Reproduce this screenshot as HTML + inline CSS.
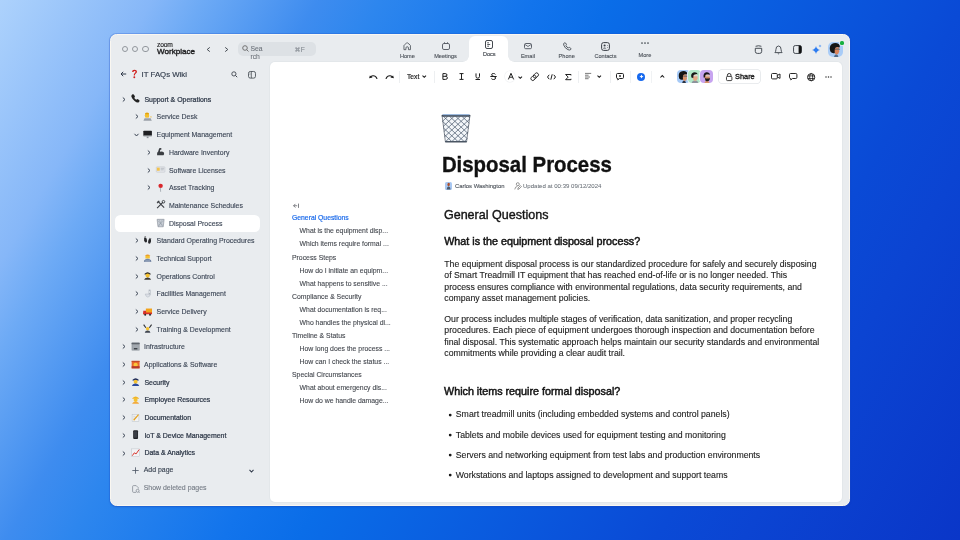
<!DOCTYPE html>
<html><head><meta charset="utf-8">
<style>
*{margin:0;padding:0;box-sizing:border-box}
html,body{width:960px;height:540px;overflow:hidden}
body{position:relative;font-family:"Liberation Sans",sans-serif;
background:linear-gradient(120deg,#ADD2FC 0%,#86B7F8 12%,#6DAAF5 16%,#3E8CEF 25%,#2D86EE 30%,#1274EC 42%,#0A6DE8 48%,#0A4AD6 76%,#0B44D2 83%,#0A36C8 100%)}
.a{position:absolute;white-space:nowrap;line-height:1}
.win{position:absolute;left:109.6px;top:33.7px;width:740.9px;height:472.3px;background:#E9ECEF;border-radius:6.5px;border:1px solid #FAF7F1;box-shadow:0 0 0 1px rgba(30,80,200,0.25),0 1px 2px rgba(10,40,150,0.25)}
.panel{position:absolute;left:269.6px;top:62.2px;width:572.4px;height:439.6px;background:#fff;border-radius:5px;box-shadow:0 0 0 1px #E3E7EA}
.tl{position:absolute;width:6.6px;height:6.6px;border:0.9px solid #92979D;border-radius:50%;top:45.6px}
.nav{color:#4B5159;font-size:5.6px;-webkit-text-stroke:0.12px #4B5159}
.sb{color:#3B4555;font-size:6.95px;-webkit-text-stroke:0.12px #3B4555}
.sbb{color:#2F3949;font-size:6.95px;-webkit-text-stroke:0.24px #2F3949}
.toc{color:#43474E;font-size:6.86px;-webkit-text-stroke:0.1px #43474E}
.body{color:#1E1E1E;font-size:8.72px;-webkit-text-stroke:0.12px #1E1E1E}
.h3{font-size:10.76px;color:#141414;-webkit-text-stroke:0.48px #141414}
.md{-webkit-text-stroke:0.25px currentColor}
svg{position:absolute;overflow:visible}
</style></head><body>
<div id="wrap" style="position:absolute;left:0;top:0;width:960px;height:540px;will-change:transform">
<div class="win"></div>
<div class="panel"></div>

<!-- traffic lights -->
<div class="tl" style="left:121.6px"></div>
<div class="tl" style="left:131.7px"></div>
<div class="tl" style="left:142px"></div>

<!-- logo -->
<div class="a" style="left:156.9px;top:42.1px;font-size:6.7px;color:#1d1d1f;letter-spacing:-0.1px;-webkit-text-stroke:0.15px #1d1d1f">zoom</div>
<div class="a" style="left:157px;top:48.1px;font-size:8.1px;color:#1d1d1f;-webkit-text-stroke:0.38px #1d1d1f">Workplace</div>

<!-- back/forward -->
<svg style="left:206px;top:47px" width="5" height="5" viewBox="0 0 5 5"><path d="M3.8 0.4 L1.2 2.5 L3.8 4.6" fill="none" stroke="#3E444C" stroke-width="0.95"/></svg>
<svg style="left:224.2px;top:47px" width="5" height="5" viewBox="0 0 5 5"><path d="M1.2 0.4 L3.8 2.5 L1.2 4.6" fill="none" stroke="#3E444C" stroke-width="0.95"/></svg>

<!-- search -->
<div class="a" style="left:238px;top:42px;width:78px;height:14px;background:#DDE1E5;border-radius:5px"></div>
<svg style="left:242px;top:45px" width="7" height="7" viewBox="0 0 7 7"><circle cx="3" cy="3" r="2.3" fill="none" stroke="#666" stroke-width="0.9"/><path d="M4.7 4.7 L6.5 6.5" stroke="#666" stroke-width="0.9"/></svg>
<div class="a" style="left:250.4px;top:46.1px;font-size:6.8px;color:#6E747C;-webkit-text-stroke:0.1px #6E747C">Sea</div>
<div class="a" style="left:250.4px;top:54.2px;font-size:6.8px;color:#6E747C;-webkit-text-stroke:0.1px #6E747C">rch</div>
<svg style="left:295.4px;top:46.6px" width="5" height="5" viewBox="0 0 5 5"><path d="M1.7 1.7 H3.3 V3.3 H1.7 Z M1.7 1.7 V1.1 A0.6 0.6 0 1 0 1.1 1.7 H1.7 M3.3 1.7 V1.1 A0.6 0.6 0 1 1 3.9 1.7 H3.3 M1.7 3.3 V3.9 A0.6 0.6 0 1 1 1.1 3.3 H1.7 M3.3 3.3 V3.9 A0.6 0.6 0 1 0 3.9 3.3 H3.3" fill="none" stroke="#7A8088" stroke-width="0.6"/></svg>
<div class="a" style="left:300.8px;top:46.8px;font-size:6.8px;color:#7A8088">F</div>

<!-- tabs -->
<div class="a" style="left:469px;top:36px;width:39px;height:30px;background:#fff;border-radius:6px 6px 0 0"></div>
<div class="a" style="left:463px;top:56px;width:6px;height:6px;background:radial-gradient(circle at 0 0,#E9ECEF 5.5px,#fff 6px)"></div>
<div class="a" style="left:508px;top:56px;width:6px;height:6px;background:radial-gradient(circle at 100% 0,#E9ECEF 5.5px,#fff 6px)"></div>
<svg style="left:402.8px;top:41.8px" width="8.4" height="8.4" viewBox="0 0 8 8"><path d="M0.9 7.3 V3.5 Q0.9 3.1 1.3 2.8 L3.4 1 Q4 0.5 4.6 1 L6.7 2.8 Q7.1 3.1 7.1 3.5 V7.3 H5.2 V5.7 Q5.2 4.5 4 4.5 Q2.8 4.5 2.8 5.7 V7.3 Z" fill="none" stroke="#4B5159" stroke-width="0.8" stroke-linejoin="round"/></svg>
<div class="a nav" style="left:399.9px;top:53.8px">Home</div>
<svg style="left:442px;top:42px" width="8" height="8" viewBox="0 0 8 8"><rect x="0.5" y="1.5" width="7" height="6" rx="1.4" fill="none" stroke="#555B63" stroke-width="0.95"/><path d="M2.5 0.3 V2 M5.5 0.3 V2" stroke="#555B63" stroke-width="0.95"/></svg>
<div class="a nav" style="left:434.2px;top:53.8px">Meetings</div>
<svg style="left:485px;top:40px" width="8" height="9" viewBox="0 0 8 9"><rect x="0.5" y="0.5" width="7" height="8" rx="1.5" fill="none" stroke="#3A3F46" stroke-width="0.95"/><path d="M2.2 2.8 H4 M2.2 4.5 H5.2 M2.2 6.2 H4" stroke="#3A3F46" stroke-width="0.85"/></svg>
<div class="a nav" style="left:482.9px;top:52.1px;color:#2F343B">Docs</div>
<svg style="left:524px;top:43px" width="8" height="6" viewBox="0 0 8 6"><rect x="0.5" y="0.5" width="7" height="5.2" rx="1.2" fill="none" stroke="#555B63" stroke-width="0.95"/><path d="M1 1.5 L4 3.5 L7 1.5" fill="none" stroke="#555B63" stroke-width="0.85"/></svg>
<div class="a nav" style="left:520.9px;top:53.8px">Email</div>
<svg style="left:562.6px;top:41.6px" width="8.8" height="8.8" viewBox="0 0 8 8"><path d="M1.2 0.8 Q0.3 1.4 0.7 2.9 Q1.6 5.6 4.6 7 Q6.3 7.7 7.1 6.8 Q7.6 6.2 7 5.7 L6 5 Q5.5 4.7 5.1 5.1 L4.8 5.4 Q3.4 4.8 2.6 3.2 L2.9 2.9 Q3.3 2.5 3 2 L2.3 0.9 Q1.8 0.4 1.2 0.8 Z" fill="none" stroke="#4B5159" stroke-width="0.85" stroke-linejoin="round"/></svg>
<div class="a nav" style="left:558.6px;top:53.8px">Phone</div>
<svg style="left:601px;top:41.8px" width="9" height="9" viewBox="0 0 9 9"><rect x="0.6" y="0.6" width="7.8" height="7.8" rx="2" fill="none" stroke="#3A3F46" stroke-width="1"/><circle cx="3.6" cy="3.5" r="1.05" fill="#3A3F46"/><path d="M1.9 6.5 Q3.6 4.6 5.3 6.5 Z" fill="#3A3F46"/><circle cx="6.4" cy="3.4" r="0.45" fill="#3A3F46"/><circle cx="6.4" cy="5.4" r="0.45" fill="#3A3F46"/></svg>
<div class="a nav" style="left:594.4px;top:53.8px">Contacts</div>
<svg style="left:641px;top:42.2px" width="8" height="2" viewBox="0 0 8 2"><circle cx="1" cy="1" r="0.85" fill="#3E444C"/><circle cx="4" cy="1" r="0.85" fill="#3E444C"/><circle cx="7" cy="1" r="0.85" fill="#3E444C"/></svg>
<div class="a nav" style="left:638.6px;top:53.3px">More</div>

<!-- right icons -->
<svg style="left:754px;top:45px" width="9" height="9" viewBox="0 0 9 9"><path d="M1.6 1.3 Q4.5 0.2 7.4 1.3" fill="none" stroke="#3E444C" stroke-width="0.95"/><path d="M1.3 3.3 H7.7 V6.4 Q7.7 8.4 5.7 8.4 H3.3 Q1.3 8.4 1.3 6.4 Z" fill="none" stroke="#3E444C" stroke-width="0.95" stroke-linejoin="round"/></svg>
<svg style="left:773.5px;top:44.5px" width="9" height="10" viewBox="0 0 9 10"><path d="M0.9 7.6 Q1.9 6.6 1.9 4.6 Q1.9 1 4.5 1 Q7.1 1 7.1 4.6 Q7.1 6.6 8.1 7.6 Z" fill="none" stroke="#3E444C" stroke-width="0.9" stroke-linejoin="round"/><path d="M3.8 8.4 Q4.5 9.2 5.2 8.4" fill="none" stroke="#3E444C" stroke-width="0.9"/></svg>
<svg style="left:792.5px;top:45px" width="9" height="9" viewBox="0 0 9 9"><rect x="0.55" y="0.55" width="7.9" height="7.9" rx="1.7" fill="none" stroke="#3E444C" stroke-width="0.95"/><path d="M5.6 0.6 H6.8 Q8.4 0.6 8.4 2.2 V6.8 Q8.4 8.4 6.8 8.4 H5.6 Z" fill="#111"/></svg>
<svg style="left:811px;top:44px" width="12" height="11" viewBox="0 0 12 11"><path d="M5 2 Q5.6 5.2 9 6 Q5.6 6.8 5 10 Q4.4 6.8 1 6 Q4.4 5.2 5 2 Z" fill="#2E7CF0"/><path d="M9 0.5 Q9.2 1.8 10.5 2 Q9.2 2.2 9 3.5 Q8.8 2.2 7.5 2 Q8.8 1.8 9 0.5 Z" fill="#5B9BF5"/></svg>
<div class="a" style="left:828px;top:41.5px;width:15px;height:15px;border-radius:5px;background:#A9CCF7;overflow:hidden">
 <svg style="left:0;top:0" width="15" height="15" viewBox="0 0 15 15"><path d="M6 15 Q6.4 12.4 8.2 12.2 Q10 12.4 10.4 15Z" fill="#4F6A8A"/><path d="M6 6 Q8.4 4.4 11 5.4 L11.2 9.6 Q10.6 12.6 8.4 12.4 Q6.4 12 6 9.6Z" fill="#D9845E"/><path d="M2.4 9.6 Q0.6 4 3.8 2 Q7.6 -0.2 11 2.2 Q12.4 3.8 11.4 5.6 Q8.8 4.4 7.2 6 Q6.4 8 6.8 11 Q4.2 12 2.4 9.6Z" fill="#151515"/><path d="M7.4 7.2 H11.6" stroke="#2A2A2A" stroke-width="1"/><path d="M7.8 7.2 H11" stroke="#E8EEF5" stroke-width="0.4"/></svg>
</div>
<div class="a" style="left:839.6px;top:40.7px;width:4.4px;height:4.4px;border-radius:1.6px;background:#16B03E;box-shadow:0 0 0 0.8px #E9ECEF"></div>


<!-- sidebar header -->
<svg style="left:120px;top:71px" width="7" height="6" viewBox="0 0 7 6"><path d="M6.2 3 H1 M3.2 0.8 L1 3 L3.2 5.2" fill="none" stroke="#2F3949" stroke-width="1"/></svg>
<svg style="left:130.5px;top:68.5px" width="7" height="10" viewBox="0 0 7 10"><path d="M1.2 3 Q1 0.8 3.5 0.8 Q6 0.8 6 2.8 Q6 4 4.6 4.8 Q3.8 5.3 3.8 6.4 L2.8 6.4 Q2.6 4.8 3.8 4 Q4.6 3.4 4.6 2.8 Q4.6 2 3.5 2 Q2.5 2 2.5 3Z" fill="#D0201E"/><circle cx="3.3" cy="8.3" r="0.95" fill="#D0201E"/></svg>
<div class="a" style="left:141.6px;top:70.7px;font-size:7.8px;color:#333D4D;-webkit-text-stroke:0.17px #333D4D">IT FAQs Wiki</div>
<svg style="left:231px;top:71px" width="7" height="7" viewBox="0 0 7 7"><circle cx="2.9" cy="2.9" r="2.1" fill="none" stroke="#353B44" stroke-width="0.85"/><path d="M4.5 4.5 L6.2 6.2" stroke="#353B44" stroke-width="0.95"/></svg>
<svg style="left:248px;top:70.6px" width="8" height="7.6" viewBox="0 0 8 7.6"><rect x="0.5" y="0.5" width="7" height="6.6" rx="1.8" fill="none" stroke="#454B53" stroke-width="0.85"/><path d="M3.3 0.5 V7.1" stroke="#454B53" stroke-width="0.8"/><path d="M1.5 2.2 H2.4 M1.5 3.4 H2.4" stroke="#454B53" stroke-width="0.5"/></svg>
<!-- selected row -->
<div class="a" style="left:115px;top:215.2px;width:144.6px;height:16.8px;background:#fff;border-radius:5.5px"></div>
<svg style="left:121.7px;top:96.80px" width="4" height="5" viewBox="0 0 4 5"><path d="M0.8 0.5 L3 2.5 L0.8 4.5" fill="none" stroke="#384252" stroke-width="1"/></svg>
<svg style="left:130.8px;top:94.30px" width="9.20" height="9.20" viewBox="0 0 9.2 9.2"><path d="M0.6 1.2 Q1.4 -0.2 2.8 0.6 L3.9 2.2 Q4.1 2.9 3.4 3.4 Q3.2 3.9 4.2 5 Q5.2 5.9 5.6 5.6 Q6.1 4.9 6.9 5.2 L8.4 6.3 Q9 7.2 7.8 8.2 Q6.3 9.3 3.6 7 Q0.9 4.6 0.4 2.8 Q0.2 1.9 0.6 1.2Z" fill="#222"/></svg>
<div class="a sbb" style="left:144.4px;top:96.78px">Support &amp; Operations</div>
<svg style="left:134.5px;top:114.48px" width="4" height="5" viewBox="0 0 4 5"><path d="M0.8 0.5 L3 2.5 L0.8 4.5" fill="none" stroke="#384252" stroke-width="1"/></svg>
<svg style="left:143.4px;top:111.96px" width="9.24" height="9.24" viewBox="0 0 8.4 8.4"><path d="M2 1 H5.4 V5 H2Z" fill="#F2B51E"/><circle cx="3.6" cy="3" r="1.9" fill="#F5C12E"/><path d="M2.2 1 Q3.6 0 5.2 1 L5 2 L2.2 2Z" fill="#E0A010"/><path d="M6 4.6 L7.6 3.8 L7.8 5 Z" fill="#F2B51E"/><path d="M0.4 8 L1.4 5.6 H7 L8 8Z" fill="#9AA0A8"/></svg>
<div class="a sb" style="left:156.5px;top:114.46px">Service Desk</div>
<svg style="left:134.0px;top:133.17px" width="5" height="4" viewBox="0 0 5 4"><path d="M0.5 0.8 L2.5 3 L4.5 0.8" fill="none" stroke="#384252" stroke-width="1"/></svg>
<svg style="left:143.4px;top:129.65px" width="9.24" height="9.24" viewBox="0 0 8.4 8.4"><rect x="0.3" y="0.6" width="7.8" height="5" rx="0.6" fill="#1E1F22"/><rect x="0.3" y="5" width="7.8" height="1" fill="#C9CDD2"/><rect x="3.4" y="6" width="1.6" height="1.4" fill="#8A8F96"/></svg>
<div class="a sb" style="left:156.5px;top:132.14px">Equipment Management</div>
<svg style="left:147.2px;top:149.85px" width="4" height="5" viewBox="0 0 4 5"><path d="M0.8 0.5 L3 2.5 L0.8 4.5" fill="none" stroke="#384252" stroke-width="1"/></svg>
<svg style="left:155.79999999999998px;top:147.33px" width="9.24" height="9.24" viewBox="0 0 8.4 8.4"><path d="M1 7.6 Q0.6 5 2 4.2 L2.6 2 Q3 0.6 4.2 1 L5.2 1.6 L4.6 2.6 L3.8 2.4 L3.6 4.4 Q5.6 3.6 7.2 5 Q7.8 6.6 6.8 7.6Z" fill="#3A3D42"/></svg>
<div class="a sb" style="left:168.9px;top:149.83px">Hardware Inventory</div>
<svg style="left:147.2px;top:167.54px" width="4" height="5" viewBox="0 0 4 5"><path d="M0.8 0.5 L3 2.5 L0.8 4.5" fill="none" stroke="#384252" stroke-width="1"/></svg>
<svg style="left:155.79999999999998px;top:165.02px" width="9.24" height="9.24" viewBox="0 0 8.4 8.4"><rect x="0.3" y="1.6" width="7.8" height="5" rx="0.6" fill="#E4E6EA" stroke="#B9BEC5" stroke-width="0.4"/><rect x="0.8" y="2.4" width="2.6" height="2.8" fill="#F3C14A"/><path d="M4.2 3 H7.4 M4.2 4.4 H7" stroke="#A5ABB3" stroke-width="0.6"/></svg>
<div class="a sb" style="left:168.9px;top:167.51px">Software Licenses</div>
<svg style="left:147.2px;top:185.22px" width="4" height="5" viewBox="0 0 4 5"><path d="M0.8 0.5 L3 2.5 L0.8 4.5" fill="none" stroke="#384252" stroke-width="1"/></svg>
<svg style="left:155.79999999999998px;top:182.70px" width="9.24" height="9.24" viewBox="0 0 8.4 8.4"><circle cx="4.2" cy="2.6" r="2" fill="#D9262B"/><path d="M4 4.4 L4.2 8" stroke="#8D949C" stroke-width="0.6"/></svg>
<div class="a sb" style="left:168.9px;top:185.20px">Asset Tracking</div>
<svg style="left:155.79999999999998px;top:200.39px" width="9.24" height="9.24" viewBox="0 0 8.4 8.4"><path d="M1 7.4 L6.4 2 M1.6 1 L7.4 7" stroke="#3A3D42" stroke-width="1"/><path d="M0.6 2.4 L2.6 0.4 L3.4 1.2 L1.4 3.2Z" fill="#3A3D42"/><circle cx="6.8" cy="1.6" r="1.2" fill="none" stroke="#3A3D42" stroke-width="0.8"/></svg>
<div class="a sb" style="left:168.9px;top:202.88px">Maintenance Schedules</div>
<svg style="left:155.79999999999998px;top:218.07px" width="9.24" height="9.24" viewBox="0 0 8.4 8.4"><path d="M1 1.2 H7.4 L6.6 8 H1.8Z" fill="#C9CED6" stroke="#7D8590" stroke-width="0.5"/><path d="M1.4 2.4 L6.6 7 M7 2.4 L1.8 7 M2.6 1.4 L6 7.8 M5.8 1.4 L2.4 7.8" stroke="#8A929D" stroke-width="0.35"/></svg>
<div class="a sb" style="left:168.9px;top:220.57px">Disposal Process</div>
<svg style="left:134.5px;top:238.28px" width="4" height="5" viewBox="0 0 4 5"><path d="M0.8 0.5 L3 2.5 L0.8 4.5" fill="none" stroke="#384252" stroke-width="1"/></svg>
<svg style="left:143.4px;top:235.76px" width="9.24" height="9.24" viewBox="0 0 8.4 8.4"><ellipse cx="2.3" cy="3.6" rx="1.3" ry="2.3" fill="#26272B" transform="rotate(-12 2.3 3.6)"/><circle cx="1.4" cy="0.9" r="0.45" fill="#26272B"/><circle cx="2.4" cy="0.7" r="0.45" fill="#26272B"/><ellipse cx="6" cy="4.8" rx="1.3" ry="2.3" fill="#26272B" transform="rotate(12 6 4.8)"/><circle cx="6.1" cy="2" r="0.45" fill="#26272B"/><circle cx="7.1" cy="2.3" r="0.45" fill="#26272B"/></svg>
<div class="a sb" style="left:156.5px;top:238.25px">Standard Operating Procedures</div>
<svg style="left:134.5px;top:255.96px" width="4" height="5" viewBox="0 0 4 5"><path d="M0.8 0.5 L3 2.5 L0.8 4.5" fill="none" stroke="#384252" stroke-width="1"/></svg>
<svg style="left:143.4px;top:253.44px" width="9.24" height="9.24" viewBox="0 0 8.4 8.4"><path d="M1.6 2.8 Q4.2 0 6.8 2.8 Z" fill="#E99A2B"/><rect x="2.2" y="2.6" width="4" height="2.4" fill="#F5C12E"/><path d="M0.8 8 Q1 5.4 4.2 5.2 Q7.4 5.4 7.6 8Z" fill="#5F7597"/><path d="M2 6.4 H6.4 M2 7.3 H6.4" stroke="#C9D3E0" stroke-width="0.4"/></svg>
<div class="a sb" style="left:156.5px;top:255.94px">Technical Support</div>
<svg style="left:134.5px;top:273.65px" width="4" height="5" viewBox="0 0 4 5"><path d="M0.8 0.5 L3 2.5 L0.8 4.5" fill="none" stroke="#384252" stroke-width="1"/></svg>
<svg style="left:143.4px;top:271.13px" width="9.24" height="9.24" viewBox="0 0 8.4 8.4"><path d="M1.4 2.6 Q4.2 -0.2 7 2.6 L7 3.2 H1.4Z" fill="#2D2A24"/><circle cx="4.2" cy="4.2" r="1.9" fill="#F5C12E"/><path d="M1 8 Q1.4 6.2 4.2 6 Q7 6.2 7.4 8Z" fill="#3B3A36"/></svg>
<div class="a sb" style="left:156.5px;top:273.62px">Operations Control</div>
<svg style="left:134.5px;top:291.33px" width="4" height="5" viewBox="0 0 4 5"><path d="M0.8 0.5 L3 2.5 L0.8 4.5" fill="none" stroke="#384252" stroke-width="1"/></svg>
<svg style="left:143.4px;top:288.81px" width="9.24" height="9.24" viewBox="0 0 8.4 8.4"><path d="M2 4.6 H6.8 Q6.6 7 4.4 7.4 Q2.4 7 2 4.6Z" fill="#DCE0E6" stroke="#A8AFB8" stroke-width="0.4"/><rect x="5.4" y="0.8" width="1.6" height="3.8" fill="#E6E9ED" stroke="#A8AFB8" stroke-width="0.4"/></svg>
<div class="a sb" style="left:156.5px;top:291.31px">Facilities Management</div>
<svg style="left:134.5px;top:309.02px" width="4" height="5" viewBox="0 0 4 5"><path d="M0.8 0.5 L3 2.5 L0.8 4.5" fill="none" stroke="#384252" stroke-width="1"/></svg>
<svg style="left:143.4px;top:306.50px" width="9.24" height="9.24" viewBox="0 0 8.4 8.4"><rect x="2.6" y="1.4" width="5.6" height="4.6" fill="#F3A21B"/><path d="M0.2 3.4 H2.8 V6.6 H0.2Z" fill="#D8302A"/><rect x="0.2" y="5" width="8" height="1.6" fill="#D8302A"/><circle cx="2" cy="7" r="0.9" fill="#2A2A2A"/><circle cx="6.4" cy="7" r="0.9" fill="#2A2A2A"/></svg>
<div class="a sb" style="left:156.5px;top:308.99px">Service Delivery</div>
<svg style="left:134.5px;top:326.70px" width="4" height="5" viewBox="0 0 4 5"><path d="M0.8 0.5 L3 2.5 L0.8 4.5" fill="none" stroke="#384252" stroke-width="1"/></svg>
<svg style="left:143.4px;top:324.19px" width="9.24" height="9.24" viewBox="0 0 8.4 8.4"><circle cx="4.2" cy="4.4" r="1.6" fill="#F5C12E"/><path d="M0.6 0.6 L2.6 3.4 M7.8 0.6 L5.8 3.4" stroke="#2E2F33" stroke-width="1"/><path d="M1.6 8 Q2 6 4.2 6 Q6.4 6 6.8 8Z" fill="#3F4550"/></svg>
<div class="a sb" style="left:156.5px;top:326.68px">Training &amp; Development</div>
<svg style="left:121.7px;top:344.39px" width="4" height="5" viewBox="0 0 4 5"><path d="M0.8 0.5 L3 2.5 L0.8 4.5" fill="none" stroke="#384252" stroke-width="1"/></svg>
<svg style="left:130.6px;top:341.87px" width="9.24" height="9.24" viewBox="0 0 8.4 8.4"><rect x="0.6" y="0.6" width="7.2" height="7.2" rx="0.5" fill="#8A9097"/><rect x="0.6" y="0.6" width="7.2" height="1.4" fill="#5E646C"/><rect x="1.2" y="2.4" width="6" height="4.8" fill="#A3A9B0"/><rect x="2.6" y="5.6" width="3.2" height="1.1" fill="#2E3238"/></svg>
<div class="a sb" style="left:144.0px;top:344.36px">Infrastructure</div>
<svg style="left:121.7px;top:362.07px" width="4" height="5" viewBox="0 0 4 5"><path d="M0.8 0.5 L3 2.5 L0.8 4.5" fill="none" stroke="#384252" stroke-width="1"/></svg>
<svg style="left:130.6px;top:359.56px" width="9.24" height="9.24" viewBox="0 0 8.4 8.4"><rect x="0.6" y="0.8" width="7.2" height="6.8" fill="#E8672A"/><circle cx="4.2" cy="4.6" r="2" fill="#F9C53A"/><rect x="0.6" y="5.6" width="7.2" height="2" fill="#B5382A"/><rect x="0.6" y="0.8" width="7.2" height="1" fill="#C24A2C"/></svg>
<div class="a sb" style="left:144.0px;top:362.05px">Applications &amp; Software</div>
<svg style="left:121.7px;top:379.76px" width="4" height="5" viewBox="0 0 4 5"><path d="M0.8 0.5 L3 2.5 L0.8 4.5" fill="none" stroke="#384252" stroke-width="1"/></svg>
<svg style="left:130.6px;top:377.24px" width="9.24" height="9.24" viewBox="0 0 8.4 8.4"><path d="M1.4 2.6 Q4.2 -0.2 7 2.6 L7 3.2 H1.4Z" fill="#1E2C5C"/><circle cx="4.2" cy="4.3" r="1.8" fill="#F5C12E"/><path d="M0.9 8.2 Q1.3 6.2 4.2 6 Q7.1 6.2 7.5 8.2Z" fill="#2B4A9E"/></svg>
<div class="a sbb" style="left:144.4px;top:379.73px">Security</div>
<svg style="left:121.7px;top:397.44px" width="4" height="5" viewBox="0 0 4 5"><path d="M0.8 0.5 L3 2.5 L0.8 4.5" fill="none" stroke="#384252" stroke-width="1"/></svg>
<svg style="left:130.6px;top:394.93px" width="9.24" height="9.24" viewBox="0 0 8.4 8.4"><path d="M1.4 2.8 Q4.2 0 7 2.8 L7.4 3.4 H1Z" fill="#F0B323"/><circle cx="4.2" cy="4.6" r="1.8" fill="#F5C12E"/><path d="M1 8 Q1.4 6.2 4.2 6.2 Q7 6.2 7.4 8Z" fill="#F2A93B"/></svg>
<div class="a sbb" style="left:144.4px;top:397.42px">Employee Resources</div>
<svg style="left:121.7px;top:415.13px" width="4" height="5" viewBox="0 0 4 5"><path d="M0.8 0.5 L3 2.5 L0.8 4.5" fill="none" stroke="#384252" stroke-width="1"/></svg>
<svg style="left:130.6px;top:412.61px" width="9.24" height="9.24" viewBox="0 0 8.4 8.4"><rect x="1" y="1.2" width="6.2" height="6.6" fill="#F2F3F5" stroke="#B3B9C1" stroke-width="0.4"/><path d="M2.4 6.6 L6.8 1.4" stroke="#E6A21E" stroke-width="1.1"/><path d="M2 3 H4 M2 4.6 H3.4" stroke="#A7AEB6" stroke-width="0.4"/></svg>
<div class="a sbb" style="left:144.4px;top:415.10px">Documentation</div>
<svg style="left:121.7px;top:432.81px" width="4" height="5" viewBox="0 0 4 5"><path d="M0.8 0.5 L3 2.5 L0.8 4.5" fill="none" stroke="#384252" stroke-width="1"/></svg>
<svg style="left:130.6px;top:430.30px" width="9.24" height="9.24" viewBox="0 0 8.4 8.4"><rect x="2" y="0.3" width="4.4" height="7.8" rx="0.8" fill="#202226"/><rect x="2.6" y="1.2" width="3.2" height="5.8" fill="#3A3E45"/></svg>
<div class="a sbb" style="left:144.4px;top:432.79px">IoT &amp; Device Management</div>
<svg style="left:121.7px;top:450.50px" width="4" height="5" viewBox="0 0 4 5"><path d="M0.8 0.5 L3 2.5 L0.8 4.5" fill="none" stroke="#384252" stroke-width="1"/></svg>
<svg style="left:130.6px;top:447.98px" width="9.24" height="9.24" viewBox="0 0 8.4 8.4"><rect x="0.6" y="0.8" width="7.2" height="7" fill="#F1F2F4" stroke="#B9BEC5" stroke-width="0.4"/><path d="M1.2 7 L3 4.4 L4.6 5.4 L7.4 1.4" fill="none" stroke="#D9352E" stroke-width="0.9"/></svg>
<div class="a sbb" style="left:144.4px;top:450.47px">Data &amp; Analytics</div>
<!-- footer -->
<svg style="left:132px;top:467px" width="7" height="7" viewBox="0 0 7 7"><path d="M3.5 0.3 V6.7 M0.3 3.5 H6.7" stroke="#4A5463" stroke-width="0.8"/></svg>
<div class="a sb" style="left:143.7px;top:467.2px;color:#333D4C">Add page</div>
<svg style="left:249px;top:469px" width="5" height="4" viewBox="0 0 5 4"><path d="M0.5 0.8 L2.5 3 L4.5 0.8" fill="none" stroke="#2F3949" stroke-width="1.05"/></svg>
<svg style="left:131.5px;top:484.5px" width="8" height="8" viewBox="0 0 8 8"><path d="M4 7.4 H1.6 Q0.6 7.4 0.6 6.4 V1.6 Q0.6 0.6 1.6 0.6 H4.2 L6.4 2.8 V3.6" fill="none" stroke="#7A818B" stroke-width="0.7"/><circle cx="5.6" cy="5.8" r="1.5" fill="none" stroke="#7A818B" stroke-width="0.7"/><path d="M6.6 6.8 L7.6 7.8" stroke="#7A818B" stroke-width="0.7"/></svg>
<div class="a sb" style="left:143.7px;top:485.4px;color:#737A84;-webkit-text-stroke:0.1px #737A84">Show deleted pages</div>

<!-- toolbar -->
<svg style="left:368.6px;top:74.6px" width="9" height="4.5" viewBox="0 0 9 4.5"><path d="M7.9 3.5 Q6.8 0.7 4 0.8 Q2.8 0.9 2 1.7" fill="none" stroke="#1A1A1A" stroke-width="1.1" stroke-linecap="round"/><path d="M0.1 3.3 L0.9 0.4 L3.6 2.6Z" fill="#1A1A1A"/></svg>
<svg style="left:384.7px;top:74.6px" width="9" height="4.5" viewBox="0 0 9 4.5"><path d="M1.1 3.5 Q2.2 0.7 5 0.8 Q6.2 0.9 7 1.7" fill="none" stroke="#1A1A1A" stroke-width="1.1" stroke-linecap="round"/><path d="M8.9 3.3 L8.1 0.4 L5.4 2.6Z" fill="#1A1A1A"/></svg>
<div class="a" style="left:399.3px;top:71px;width:0.7px;height:11.5px;background:#EDEFF1"></div>
<div class="a" style="left:407px;top:74px;font-size:6.7px;color:#1E1E1E;-webkit-text-stroke:0.2px #1E1E1E">Text</div>
<svg style="left:421.8px;top:75.3px" width="4.5" height="3" viewBox="0 0 4.5 3"><path d="M0.5 0.6 L2.25 2.3 L4 0.6" fill="none" stroke="#1A1A1A" stroke-width="1.05"/></svg>
<div class="a" style="left:434px;top:71px;width:0.7px;height:11.5px;background:#EDEFF1"></div>
<svg style="left:441.5px;top:73px" width="6" height="7" viewBox="0 0 6 7"><path d="M0.9 0.6 H3.2 Q5 0.6 5 2 Q5 3.3 3.2 3.3 H0.9 M3.2 3.3 Q5.4 3.3 5.4 4.8 Q5.4 6.4 3.4 6.4 H0.9 V0.6" fill="none" stroke="#1E1E1E" stroke-width="1"/></svg>
<svg style="left:458.5px;top:73px" width="5" height="7" viewBox="0 0 5 7"><path d="M0.5 0.6 H4.5 M0.5 6.4 H4.5 M2.5 0.6 V6.4" fill="none" stroke="#1E1E1E" stroke-width="1"/></svg>
<svg style="left:474.5px;top:73px" width="5.5" height="7" viewBox="0 0 5.5 7"><path d="M1 0.4 V3.4 Q1 5.2 2.75 5.2 Q4.5 5.2 4.5 3.4 V0.4 M0.5 6.5 H5" fill="none" stroke="#1E1E1E" stroke-width="1"/></svg>
<svg style="left:490px;top:73px" width="7" height="7" viewBox="0 0 7 7"><path d="M5.4 1.4 Q4.8 0.5 3.5 0.5 Q1.6 0.5 1.6 1.8 Q1.6 2.9 3.5 3.3 Q5.6 3.8 5.6 5 Q5.6 6.5 3.5 6.5 Q2 6.5 1.4 5.6 M0.3 3.5 H6.7" fill="none" stroke="#1E1E1E" stroke-width="1"/></svg>
<div class="a" style="left:505px;top:71.4px;width:10.2px;height:10.2px;border-radius:50%;box-shadow:0 0 0 0.6px #EEF0F2"></div>
<svg style="left:507.7px;top:73.4px" width="6" height="6.6" viewBox="0 0 6 6.6"><path d="M0.4 6.4 L3 0.3 L5.6 6.4 M1.4 4.2 H4.6" fill="none" stroke="#1E1E1E" stroke-width="1"/></svg>
<svg style="left:517.6px;top:75.5px" width="4.5" height="3" viewBox="0 0 4.5 3"><path d="M0.5 0.6 L2.25 2.3 L4 0.6" fill="none" stroke="#1A1A1A" stroke-width="1.05"/></svg>
<svg style="left:530.4px;top:72.2px" width="9.4" height="9.4" viewBox="0 0 9 9"><g transform="rotate(-45 4.5 4.5)" fill="none" stroke="#1E1E1E" stroke-width="0.85"><rect x="0.1" y="2.7" width="5.6" height="3.6" rx="1.8"/><rect x="3.3" y="2.7" width="5.6" height="3.6" rx="1.8"/></g></svg>
<svg style="left:546.8px;top:74.2px" width="9" height="6" viewBox="0 0 9 6"><path d="M2.2 0.8 L0.5 3 L2.2 5.2 M6.8 0.8 L8.5 3 L6.8 5.2 M5.2 0.3 L3.8 5.7" fill="none" stroke="#1E1E1E" stroke-width="1"/></svg>
<svg style="left:564.7px;top:73.7px" width="6.5" height="6.2" viewBox="0 0 6.5 6.2"><path d="M6 1.4 V0.5 H0.6 L3.2 3.1 L0.6 5.7 H6 V4.8" fill="none" stroke="#1E1E1E" stroke-width="1"/></svg>
<div class="a" style="left:578.2px;top:71px;width:0.7px;height:11.5px;background:#EDEFF1"></div>
<svg style="left:585.2px;top:73.2px" width="6.5" height="6" viewBox="0 0 6.5 6"><path d="M0 0.4 H6.2 M0 2.2 H3.6 M0 4 H5 M0 5.7 H3.6" fill="none" stroke="#444" stroke-width="0.7"/></svg>
<svg style="left:596.8px;top:75.3px" width="4.5" height="3" viewBox="0 0 4.5 3"><path d="M0.5 0.6 L2.25 2.3 L4 0.6" fill="none" stroke="#1A1A1A" stroke-width="1.05"/></svg>
<div class="a" style="left:609.5px;top:71px;width:0.7px;height:11.5px;background:#EDEFF1"></div>
<svg style="left:616.4px;top:73px" width="8" height="7.4" viewBox="0 0 8 7.4"><path d="M1.6 0.5 H6.4 Q7.5 0.5 7.5 1.6 V4.4 Q7.5 5.5 6.4 5.5 H3.4 L1.8 6.9 V5.5 H1.6 Q0.5 5.5 0.5 4.4 V1.6 Q0.5 0.5 1.6 0.5Z" fill="none" stroke="#1E1E1E" stroke-width="1"/><circle cx="4" cy="3" r="0.9" fill="#222"/></svg>
<div class="a" style="left:629.6px;top:71px;width:0.8px;height:11.5px;background:#F0F2F4"></div>
<div class="a" style="left:636.8px;top:72.7px;width:8.4px;height:8.4px;border-radius:50%;background:#1769EE"></div>
<svg style="left:638.5px;top:74.4px" width="5" height="5" viewBox="0 0 5 5"><path d="M2.5 0.4 Q2.8 2.2 4.6 2.5 Q2.8 2.8 2.5 4.6 Q2.2 2.8 0.4 2.5 Q2.2 2.2 2.5 0.4Z" fill="#fff"/></svg>
<div class="a" style="left:650.6px;top:71px;width:0.8px;height:11.5px;background:#F0F2F4"></div>
<svg style="left:659.8px;top:75.4px" width="4.6" height="3" viewBox="0 0 4.6 3"><path d="M0.4 2.5 L2.3 0.6 L4.2 2.5" fill="none" stroke="#1A1A1A" stroke-width="1.05"/></svg>
<!-- TOC -->
<svg style="left:292.6px;top:203px" width="6" height="5.5" viewBox="0 0 6 5.5"><path d="M4.2 2.75 H0.6 M2.4 0.9 L0.6 2.75 L2.4 4.6 M5.5 0.6 V4.9" fill="none" stroke="#4A4E55" stroke-width="0.7"/></svg>
<div class="a toc" style="left:292px;top:215.40px;color:#1D6CEB;-webkit-text-stroke:0.2px #1D6CEB;font-size:6.8px">General Questions</div>
<div class="a toc" style="left:299.6px;top:228.35px">What is the equipment disp...</div>
<div class="a toc" style="left:299.6px;top:241.43px">Which items require formal ...</div>
<div class="a toc" style="left:292px;top:254.51px">Process Steps</div>
<div class="a toc" style="left:299.6px;top:267.59px">How do I initiate an equipm...</div>
<div class="a toc" style="left:299.6px;top:280.67px">What happens to sensitive ...</div>
<div class="a toc" style="left:292px;top:293.75px">Compliance &amp; Security</div>
<div class="a toc" style="left:299.6px;top:306.83px">What documentation is req...</div>
<div class="a toc" style="left:299.6px;top:319.91px">Who handles the physical di...</div>
<div class="a toc" style="left:292px;top:332.99px">Timeline &amp; Status</div>
<div class="a toc" style="left:299.6px;top:346.07px">How long does the process ...</div>
<div class="a toc" style="left:299.6px;top:359.15px">How can I check the status ...</div>
<div class="a toc" style="left:292px;top:372.23px">Special Circumstances</div>
<div class="a toc" style="left:299.6px;top:385.31px">What about emergency dis...</div>
<div class="a toc" style="left:299.6px;top:398.39px">How do we handle damage...</div>
<!-- doc -->
<svg style="left:441px;top:113.5px" width="30" height="29" viewBox="0 0 30 29">
 <defs><clipPath id="bk"><path d="M0.8 2.4 H29.2 L25.8 27.8 H4.2Z"/></clipPath></defs>
 <path d="M0.8 2.4 H29.2 L25.8 27.8 H4.2Z" fill="#F3F6F9"/>
 <g clip-path="url(#bk)"><path d="M-47.6 2 L-17.6 30 M-17.6 2 L-47.6 30 M-41.4 2 L-11.4 30 M-11.4 2 L-41.4 30 M-35.2 2 L-5.2 30 M-5.2 2 L-35.2 30 M-29.0 2 L1.0 30 M1.0 2 L-29.0 30 M-22.8 2 L7.2 30 M7.2 2 L-22.8 30 M-16.6 2 L13.4 30 M13.4 2 L-16.6 30 M-10.4 2 L19.6 30 M19.6 2 L-10.4 30 M-4.2 2 L25.8 30 M25.8 2 L-4.2 30 M2.0 2 L32.0 30 M32.0 2 L2.0 30 M8.2 2 L38.2 30 M38.2 2 L8.2 30 M14.4 2 L44.4 30 M44.4 2 L14.4 30 M20.6 2 L50.6 30 M50.6 2 L20.6 30 M26.8 2 L56.8 30 M56.8 2 L26.8 30 M33.0 2 L63.0 30 M63.0 2 L33.0 30 M39.2 2 L69.2 30 M69.2 2 L39.2 30 M45.4 2 L75.4 30 M75.4 2 L45.4 30 M51.6 2 L81.6 30 M81.6 2 L51.6 30 M57.8 2 L87.8 30 M87.8 2 L57.8 30 M64.0 2 L94.0 30 M94.0 2 L64.0 30 M70.2 2 L100.2 30 M100.2 2 L70.2 30 M76.4 2 L106.4 30 M106.4 2 L76.4 30 M82.6 2 L112.6 30 M112.6 2 L82.6 30" stroke="#C4D2E2" stroke-width="1" fill="none"/><path d="M-47.6 2 L-17.6 30 M-17.6 2 L-47.6 30 M-41.4 2 L-11.4 30 M-11.4 2 L-41.4 30 M-35.2 2 L-5.2 30 M-5.2 2 L-35.2 30 M-29.0 2 L1.0 30 M1.0 2 L-29.0 30 M-22.8 2 L7.2 30 M7.2 2 L-22.8 30 M-16.6 2 L13.4 30 M13.4 2 L-16.6 30 M-10.4 2 L19.6 30 M19.6 2 L-10.4 30 M-4.2 2 L25.8 30 M25.8 2 L-4.2 30 M2.0 2 L32.0 30 M32.0 2 L2.0 30 M8.2 2 L38.2 30 M38.2 2 L8.2 30 M14.4 2 L44.4 30 M44.4 2 L14.4 30 M20.6 2 L50.6 30 M50.6 2 L20.6 30 M26.8 2 L56.8 30 M56.8 2 L26.8 30 M33.0 2 L63.0 30 M63.0 2 L33.0 30 M39.2 2 L69.2 30 M69.2 2 L39.2 30 M45.4 2 L75.4 30 M75.4 2 L45.4 30 M51.6 2 L81.6 30 M81.6 2 L51.6 30 M57.8 2 L87.8 30 M87.8 2 L57.8 30 M64.0 2 L94.0 30 M94.0 2 L64.0 30 M70.2 2 L100.2 30 M100.2 2 L70.2 30 M76.4 2 L106.4 30 M106.4 2 L76.4 30 M82.6 2 L112.6 30 M112.6 2 L82.6 30" stroke="#3A434F" stroke-width="0.5" fill="none"/></g>
 <path d="M1.2 2.4 L4.4 27.8 M28.8 2.4 L25.6 27.8" stroke="#3A4350" stroke-width="0.6"/>
 <rect x="0.5" y="0.7" width="29" height="2.1" rx="1.05" fill="#3E4855"/>
 <rect x="1.5" y="0.3" width="27" height="0.9" rx="0.45" fill="#8FB2E0"/>
 <rect x="4" y="27.1" width="22" height="1.3" rx="0.65" fill="#4A5563"/>
</svg>
<div class="a" style="left:441.9px;top:155.3px;font-size:20.4px;font-weight:bold;color:#111;-webkit-text-stroke:0.3px #111;transform:scaleY(1.065);transform-origin:0 84%">Disposal Process</div>
<div class="a" style="left:445px;top:182.2px;width:7px;height:7.4px;border-radius:1.6px;background:#A9C8F2;overflow:hidden"><svg style="left:0;top:0" width="7" height="7.4" viewBox="0 0 7 7.4"><path d="M2.4 2.4 Q2.4 0.8 3.8 0.8 Q5.2 1 4.8 2.8 L4.4 4 L2.8 4Z" fill="#B0502A"/><path d="M1.6 7.4 Q2 4.4 3.6 4.2 Q5.4 4.4 5.6 7.4Z" fill="#4E5B6B"/></svg></div>
<div class="a" style="left:455px;top:184px;font-size:5.9px;color:#4E545C;-webkit-text-stroke:0.12px #4E545C">Carlos Washington</div>
<svg style="left:514.2px;top:181.8px" width="8" height="8" viewBox="0 0 8 8"><circle cx="3.8" cy="2.2" r="1.5" fill="none" stroke="#555" stroke-width="0.6"/><path d="M0.8 7.4 Q1 4.6 3.4 4.4" fill="none" stroke="#555" stroke-width="0.6"/><path d="M3.8 7.4 L4 6 L6.4 3.6 L7.4 4.6 L5 7 Z" fill="none" stroke="#555" stroke-width="0.6"/></svg>
<div class="a" style="left:522.9px;top:183.1px;font-size:6.07px;color:#6A7078;-webkit-text-stroke:0.05px #6A7078">Updated at 00:39 09/12/2024</div>

<div class="a" style="left:443.9px;top:209.4px;font-size:12.55px;color:#141414;-webkit-text-stroke:0.38px #141414">General Questions</div>
<div class="a h3" style="left:444.2px;top:235.9px">What is the equipment disposal process?</div>
<div class="a body" style="left:444.3px;top:259.0px;line-height:11.42px;white-space:normal;width:400px">The equipment disposal process is our standardized procedure for safely and securely disposing<br>of Smart Treadmill IT equipment that has reached end-of-life or is no longer needed. This<br>process ensures compliance with environmental regulations, data security requirements, and<br>company asset management policies.</div>
<div class="a body" style="left:444.3px;top:313.8px;line-height:11.42px;white-space:normal;width:400px">Our process includes multiple stages of verification, data sanitization, and proper recycling<br>procedures. Each piece of equipment undergoes thorough inspection and documentation before<br>final disposal. This systematic approach helps maintain our security standards and environmental<br>commitments while providing a clear audit trail.</div>
<div class="a h3" style="left:444px;top:385.8px">Which items require formal disposal?</div>
<svg style="left:447.5px;top:413.05px" width="4" height="4" viewBox="0 0 4 4"><circle cx="2.2" cy="2.1" r="1.4" fill="#1A1A1A"/></svg>
<div class="a body" style="left:455.8px;top:410.4px">Smart treadmill units (including embedded systems and control panels)</div>
<svg style="left:447.5px;top:433.25px" width="4" height="4" viewBox="0 0 4 4"><circle cx="2.2" cy="2.1" r="1.4" fill="#1A1A1A"/></svg>
<div class="a body" style="left:455.8px;top:430.6px">Tablets and mobile devices used for equipment testing and monitoring</div>
<svg style="left:447.5px;top:453.25px" width="4" height="4" viewBox="0 0 4 4"><circle cx="2.2" cy="2.1" r="1.4" fill="#1A1A1A"/></svg>
<div class="a body" style="left:455.8px;top:450.6px">Servers and networking equipment from test labs and production environments</div>
<svg style="left:447.5px;top:473.45px" width="4" height="4" viewBox="0 0 4 4"><circle cx="2.2" cy="2.1" r="1.4" fill="#1A1A1A"/></svg>
<div class="a body" style="left:455.8px;top:470.8px">Workstations and laptops assigned to development and support teams</div>

<!-- right toolbar -->
<div class="a" style="left:676.5px;top:70px;width:13px;height:13px;border-radius:4px;background:#A6CAF7;overflow:hidden"><svg style="left:0;top:0" width="13" height="13" viewBox="0 0 13 13"><path d="M5.2 13 Q5.4 10.6 7 10.4 Q8.6 10.6 9 13Z" fill="#2A3444"/><path d="M5 5 Q7 3.4 9.6 4.4 L10 8.4 Q9.4 11 7.4 11 Q5.6 10.6 5 8.6Z" fill="#D9936C"/><path d="M2.2 8.4 Q0.8 3.6 3.6 1.8 Q7 0 9.8 2.2 Q10.6 3.6 9.6 4.6 Q7.4 3.8 6.2 5.2 Q5.6 7 6 9.4 Q4 10.4 2.2 8.4Z" fill="#141414"/><path d="M6.6 6.2 H10.4" stroke="#2A2A2A" stroke-width="0.9"/><path d="M7 6.2 H9.8" stroke="#E8EEF5" stroke-width="0.35"/></svg></div>
<div class="a" style="left:688px;top:70px;width:13px;height:13px;border-radius:4px;background:#B2E8C8;overflow:hidden;box-shadow:-0.7px 0 0 #fff"><svg style="left:0;top:0" width="13" height="13" viewBox="0 0 13 13"><path d="M3.6 13 Q4.4 10.4 7 10.6 Q9.6 10.4 10.4 13Z" fill="#8D949C"/><path d="M4.6 5 Q7 3.8 9.4 5 L9.6 8.6 Q9 11 7.2 11 Q5.2 10.8 4.8 8.6Z" fill="#E6A987"/><path d="M3.4 7.6 Q2.4 3.4 5.4 2.4 Q8.6 1.6 9.8 4.2 Q8.2 3.6 6.4 4.4 Q5.2 5.4 5.2 8Z" fill="#161616"/><path d="M5.6 5.8 H9.8" stroke="#DCE3EA" stroke-width="1.1"/></svg></div>
<div class="a" style="left:699.6px;top:70px;width:13px;height:13px;border-radius:4px;background:#C7A4F0;overflow:hidden;box-shadow:-0.7px 0 0 #fff"><svg style="left:0;top:0" width="13" height="13" viewBox="0 0 13 13"><path d="M4.4 13 Q5 10.8 7 10.8 Q9 10.8 9.6 13Z" fill="#D9936C"/><path d="M4.6 5 Q7 3.8 9.6 5 L9.8 8.4 Q9.2 11 7.2 11 Q5.2 10.8 4.8 8.6Z" fill="#D08A62"/><path d="M3.6 7.4 Q3 2.6 6.4 2.2 Q9.6 2 10 4.8 Q8 3.8 6 4.6 Q5 5.6 5 7.6Z" fill="#161616"/><path d="M5 8 Q7.2 9 9.8 8 L9.6 10 Q7.4 12.4 5.4 10.4Z" fill="#1C1C1C"/><path d="M5.6 5.9 H9.8" stroke="#E4E9EE" stroke-width="1"/></svg></div>
<div class="a" style="left:718.2px;top:69.2px;width:43px;height:15.3px;border-radius:4.5px;box-shadow:inset 0 0 0 0.8px #E3E6E9;background:#fff"></div>
<svg style="left:725.6px;top:72.7px" width="6.4" height="8" viewBox="0 0 6.4 8"><path d="M1.4 3.4 V2.2 Q1.4 0.5 3.2 0.5 Q5 0.5 5 2.2 V3.4" fill="none" stroke="#262626" stroke-width="0.95"/><rect x="0.5" y="3.4" width="5.4" height="4.2" rx="0.9" fill="none" stroke="#222" stroke-width="0.85"/></svg>
<div class="a" style="left:735px;top:73.3px;font-size:7.4px;color:#1E1E1E;-webkit-text-stroke:0.35px #1E1E1E">Share</div>
<svg style="left:771.2px;top:73.4px" width="9.5" height="6.4" viewBox="0 0 9.5 6.4"><rect x="0.5" y="0.5" width="5.8" height="5.4" rx="1" fill="none" stroke="#262626" stroke-width="1.00"/><path d="M6.3 2.4 L9 1 V5.4 L6.3 4" fill="none" stroke="#262626" stroke-width="1.00" stroke-linejoin="round"/></svg>
<svg style="left:789px;top:72.8px" width="8.4" height="7.6" viewBox="0 0 8.4 7.6"><path d="M1.6 0.5 H6.8 Q7.9 0.5 7.9 1.6 V4.4 Q7.9 5.5 6.8 5.5 H3.4 L1.8 7 V5.5 H1.6 Q0.5 5.5 0.5 4.4 V1.6 Q0.5 0.5 1.6 0.5Z" fill="none" stroke="#262626" stroke-width="1.00"/></svg>
<svg style="left:806.6px;top:72.5px" width="8.4" height="8.4" viewBox="0 0 8.4 8.4"><circle cx="4.2" cy="4.2" r="3.6" fill="none" stroke="#262626" stroke-width="1.00"/><ellipse cx="4.2" cy="4.2" rx="1.5" ry="3.6" fill="none" stroke="#262626" stroke-width="0.90"/><path d="M0.6 2.9 H7.8 M0.6 5.5 H7.8" stroke="#262626" stroke-width="0.80"/></svg>
<svg style="left:824.6px;top:75.8px" width="7" height="2" viewBox="0 0 7 2"><circle cx="1" cy="1" r="0.75" fill="#333"/><circle cx="3.5" cy="1" r="0.75" fill="#333"/><circle cx="6" cy="1" r="0.75" fill="#333"/></svg>
</div>
</body></html>
